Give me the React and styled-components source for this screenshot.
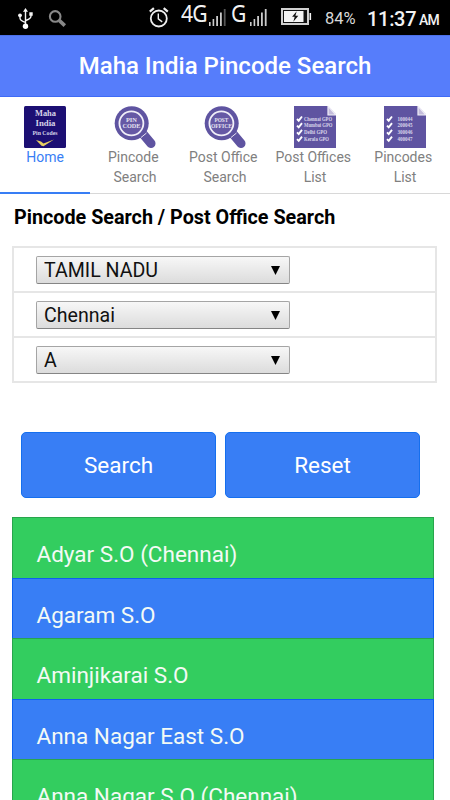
import { useState } from 'react';
import styled, { createGlobalStyle } from 'styled-components';

const tabs = [
    { id: 'home', lines: ['Home'], icon: <HomeIcon /> },
    { id: 'pincode', lines: ['Pincode ', 'Search'], icon: <LensIcon words={['PIN', 'CODE']} /> },
    { id: 'office', lines: ['Post Office ', 'Search'], icon: <LensIcon words={['POST', 'OFFICE']} /> },
    { id: 'offices', lines: ['Post Offices ', 'List'], icon: <ListIcon rows={['Chennai GPO', 'Mumbai GPO', 'Delhi GPO', 'Kerala GPO']} x={10} widths={[28, 28.5, 23, 25]} /> },
    { id: 'pincodes', lines: ['Pincodes ', 'List'], icon: <ListIcon rows={['100044', '200045', '300046', '400047']} x={13.5} widths={[15, 15, 15, 15]} /> },
];

const filters = ['TAMIL NADU', 'Chennai', 'A'];

const offices = [
    'Adyar S.O (Chennai)',
    'Agaram S.O',
    'Aminjikarai S.O',
    'Anna Nagar East S.O',
    'Anna Nagar S.O (Chennai)',
];

export default function App() {

    const [ active, setActive ] = useState('home');

    return (
        <Screen>
            <GlobalStyle />
            <StatusBar />
            <Header>Maha India Pincode Search</Header>
            <Tabs>
                {tabs.map(t =>
                    <Tab key={t.id} $active={t.id === active} onClick={() => setActive(t.id)}>
                        {t.icon}
                        {t.lines.map(line => <span key={line}>{line}</span>)}
                    </Tab>
                )}
            </Tabs>
            <Title>Pincode Search / Post Office Search</Title>
            <Filters>
                {filters.map(f =>
                    <FilterRow key={f}>
                        <SelectBox>
                            <select defaultValue={f}>
                                <option>{f}</option>
                            </select>
                            <svg width="9" height="9" viewBox="0 0 9 9">
                                <path d="M0 0h9L4.5 9z" />
                            </svg>
                        </SelectBox>
                    </FilterRow>
                )}
            </Filters>
            <Actions>
                <Button>Search</Button>
                <Button>Reset</Button>
            </Actions>
            <Results>
                {offices.map((name, i) =>
                    <Office key={name} $green={i % 2 === 0}>{name}</Office>
                )}
            </Results>
        </Screen>
    );
}

function StatusBar() {
    return (
        <Status>
            <Slot $left={18} $top={8} $width={15}>
                <svg width="15" height="21" viewBox="0 0 15 21" fill="none" stroke="#f4f4f4" strokeWidth="1.4">
                    <path d="M7.5 18V3M7.5 14.5C4.5 13.2 2 12.8 2 10V7.5M7.5 12.5C10.5 11.5 13 11 13 8V6.5" />
                    <path d="M7.5 0 10 3.8H5zM11.3 4.3h3.4v3.4h-3.4z" fill="#f4f4f4" stroke="none" />
                    <circle cx="2" cy="7.3" r="1.9" fill="#f4f4f4" stroke="none" />
                    <circle cx="7.5" cy="18.2" r="2.7" fill="#fff" stroke="none" />
                </svg>
            </Slot>
            <Slot $left={15} $top={9} $width={19}>
                <svg width="19" height="19" viewBox="0 0 19 19" fill="none" stroke="#888">
                    <circle cx="7.2" cy="7.4" r="5.3" strokeWidth="2.1" />
                    <path d="m11.2 11.4 5.6 5.2" strokeWidth="3.6" />
                </svg>
            </Slot>
            <Slot $left={82} $top={7} $width={20}>
                <svg width="20" height="21" viewBox="0 0 20 21" fill="none" stroke="#eee">
                    <circle cx="9.8" cy="11.5" r="8" strokeWidth="1.8" />
                    <path d="M9.3 6.5v5.4l3.9 3" strokeWidth="1.4" />
                    <path d="M.8 4.6 4.9 1.2M18.8 4.6 14.7 1.2" strokeWidth="2.2" />
                </svg>
            </Slot>
            <Network $left={12} $width={29}>4G</Network>
            <Signal dim />
            <Network $left={5} $width={20}>G</Network>
            <Signal />
            <Slot $left={14} $top={8} $width={31}>
                <svg width="31" height="17" viewBox="0 0 31 17">
                    <path d="M1 1h26v15H1z" fill="#111" stroke="#d0d0d0" strokeWidth="2" />
                    <path d="M3 3h19.5v11H3zM28.5 5h1.6v7h-1.6z" fill="#f4f4f4" />
                    <path d="m15.7 3.2-4.6 5.6h2.6l-1.4 5 5-6h-2.9z" fill="#111" />
                </svg>
            </Slot>
            <Percent>84%</Percent>
            <Clock>11:37</Clock>
            <Meridiem>AM</Meridiem>
        </Status>
    );
}

function Signal({ dim }) {
    return (
        <Slot $left={-1} $top={9} $width={17}>
            <svg width="17" height="17" viewBox="0 0 17 17" fill="#cbcbcb">
                <path d="M0 13h1.6v4H0zM3.6 10h1.6v7H3.6zM7.2 7h1.8v10H7.2zM11 3.5h1.8V17H11z" />
                <path d="M14.8 0h1.8v17h-1.8z" fill={dim ? '#555' : '#cbcbcb'} />
            </svg>
        </Slot>
    );
}

function HomeIcon() {
    return (
        <TabIcon viewBox="0 0 42 42">
            <rect width="42" height="42" rx="1.5" fill="#1c0f73" />
            <g fill="#d5d3e8" fontFamily="Liberation Serif, serif" fontWeight="bold" textAnchor="middle">
                <text x="21.5" y="10" fontSize="8.8" textLength="21" lengthAdjust="spacingAndGlyphs">Maha</text>
                <text x="21.5" y="20" fontSize="8.8" textLength="20" lengthAdjust="spacingAndGlyphs">India</text>
                <text x="21" y="29.3" fontSize="6.2" textLength="25" lengthAdjust="spacingAndGlyphs">Pin Codes</text>
            </g>
            <path d="m12 34 5 1.5 2.5 2L30 33.5l-10.5 6.7-2-.5z" fill="#e8cf62" />
        </TabIcon>
    );
}

function LensIcon({ words }) {
    const wide = words[1].length > 4;
    return (
        <TabIcon viewBox="0 0 42 42">
            <path d="m29.5 28.5 7.5 9" stroke="#5f54a1" strokeWidth="9" strokeLinecap="round" />
            <circle cx="17.7" cy="17.3" r="17" fill="#5f54a1" />
            <path d="m27 31.5 5.5-4.5" stroke="#e5e2f0" strokeWidth="1" />
            <circle cx="17.4" cy="17.3" r="12" fill="#6659a5" stroke="#f1eff8" strokeWidth="1.8" />
            <g fill="#e5e2f0" fontFamily="Liberation Serif, serif" fontWeight="bold" textAnchor="middle">
                <text x="17.4" y="15.6" fontSize={wide ? 5.4 : 5.8} textLength={wide ? 14 : 11} lengthAdjust="spacingAndGlyphs">{words[0]}</text>
                <text x="17.4" y="22.4" fontSize={wide ? 5.4 : 6} textLength={wide ? 21 : 18} lengthAdjust="spacingAndGlyphs">{words[1]}</text>
            </g>
        </TabIcon>
    );
}

function ListIcon({ rows, x, widths }) {
    return (
        <TabIcon viewBox="0 0 42 42">
            <path d="M0 0h34l8 8.5V42H0z" fill="#5f54a1" />
            <path d="M34 0v9h8z" fill="#c3bcdb" stroke="#f1eff8" strokeWidth="1.2" />
            <g fill="#d9d5ea" fontFamily="Liberation Serif, serif" fontWeight="bold" fontSize="5.5">
                {rows.map((row, i) =>
                    <g key={row}>
                        <path d={`m3 ${13 + i * 6.7} 1.7 1.7 3.3-4.2`} fill="none" stroke="#fff" strokeWidth="1.9" />
                        <text x={x} y={14.7 + i * 6.7} textLength={widths[i]} lengthAdjust="spacingAndGlyphs">{row}</text>
                    </g>
                )}
            </g>
        </TabIcon>
    );
}

const GlobalStyle = createGlobalStyle`
    * {
        box-sizing: border-box;
    }
    body {
        margin: 0;
        background: #fff;
        font-family: Roboto, sans-serif;
        overflow: hidden;
    }
`;

const Screen = styled.div`
    width: 450px;
    height: 800px;
    overflow: hidden;
    background: #fff;
`;

const Status = styled.div`
    display: flex;
    align-items: flex-start;
    height: 35px;
    background: #000;
    color: #f2f2f2;
    white-space: nowrap;
`;

const Slot = styled.div`
    flex: none;
    width: ${p => p.$width}px;
    margin-left: ${p => p.$left}px;
    padding-top: ${p => p.$top}px;
    svg {
        display: block;
    }
`;

const Network = styled.span`
    flex: none;
    width: ${p => p.$width}px;
    margin-left: ${p => p.$left}px;
    font-family: "Noto Sans", sans-serif;
    font-size: 24px;
    line-height: 33px;
    margin-top: -4px;
    letter-spacing: -1px;
    transform: scaleX(.88);
    transform-origin: left;
`;

const Percent = styled.span`
    width: 42px;
    margin-left: 13px;
    padding-top: 9px;
    font-size: 16.5px;
    line-height: 20px;
    color: #d8d8d8;
`;

const Clock = styled.span`
    width: 52px;
    padding-top: 7px;
    font-size: 20px;
    font-weight: 500;
    line-height: 24px;
    letter-spacing: -.3px;
`;

const Meridiem = styled.span`
    padding-top: 10px;
    font-size: 14px;
    font-weight: 500;
    line-height: 20px;
    letter-spacing: -.7px;
`;

const Header = styled.header`
    height: 62px;
    border-top: 1px solid #4a6fe8;
    border-bottom: 1px solid #3f6bf5;
    background: #567dfb;
    color: #fff;
    font-size: 24px;
    font-weight: 500;
    line-height: 60px;
    text-align: center;
`;

const Tabs = styled.nav`
    display: flex;
    height: 97px;
    box-shadow: inset 0 -1px 0 #d8d8d8;
`;

const Tab = styled.button`
    display: flex;
    flex-direction: column;
    align-items: center;
    width: 90px;
    padding: 9px 0 0;
    border: 0;
    border-bottom: 2px solid ${p => p.$active ? '#387ef5' : 'transparent'};
    background: none;
    color: ${p => p.$active ? '#387ef5' : '#808080'};
    font-family: inherit;
    font-size: 14px;
    line-height: 19.5px;
    white-space: pre;
    cursor: pointer;
`;

const TabIcon = styled.svg`
    display: block;
    flex: none;
    width: 42px;
    height: 42px;
`;

const Title = styled.h1`
    margin: 0;
    padding: 11px 14px 0;
    height: 52px;
    font-size: 19.75px;
    font-weight: 700;
    line-height: 26px;
    color: #000;
    white-space: nowrap;
`;

const Filters = styled.div`
    width: 425px;
    margin-left: 12px;
    border: 2px solid #e6e6e6;
`;

const FilterRow = styled.div`
    display: flex;
    align-items: center;
    height: 45px;
    padding-left: 22px;
    border-bottom: 2px solid #e6e6e6;
    &:last-child {
        height: 43px;
        border-bottom: 0;
    }
`;

const SelectBox = styled.label`
    display: flex;
    align-items: center;
    width: 254px;
    height: 28px;
    padding: 1px 9px 0 7px;
    border: 1px solid #a5a5a5;
    border-bottom-color: #858585;
    border-radius: 2px;
    background: linear-gradient(#f7f7f7, #dcdcdc);
    select {
        flex: 1;
        padding: 1px 0 0;
        border: 0;
        appearance: none;
        background: none;
        color: #111;
        font-family: inherit;
        font-size: 19.6px;
        line-height: 24px;
    }
`;

const Actions = styled.div`
    display: flex;
    gap: 9px;
    padding: 49px 0 19px 21px;
`;

const Button = styled.button`
    width: 195px;
    height: 66px;
    border: 1px solid #156fee;
    border-radius: 5px;
    background: #387ef5;
    color: #fff;
    font-family: inherit;
    font-size: 22.5px;
    cursor: pointer;
`;

const Results = styled.div`
    width: 422px;
    margin-left: 12px;
    padding-top: .4px;
`;

const Office = styled.div`
    height: 60.4px;
    padding: 21px 24px 0 23.5px;
    border: 1px solid ${p => p.$green ? '#28a54c' : '#0c60ee'};
    border-bottom: 0;
    background: ${p => p.$green ? '#33cd5f' : '#387ef5'};
    color: #f3faf5;
    font-size: 22.5px;
    line-height: 30px;
`;
